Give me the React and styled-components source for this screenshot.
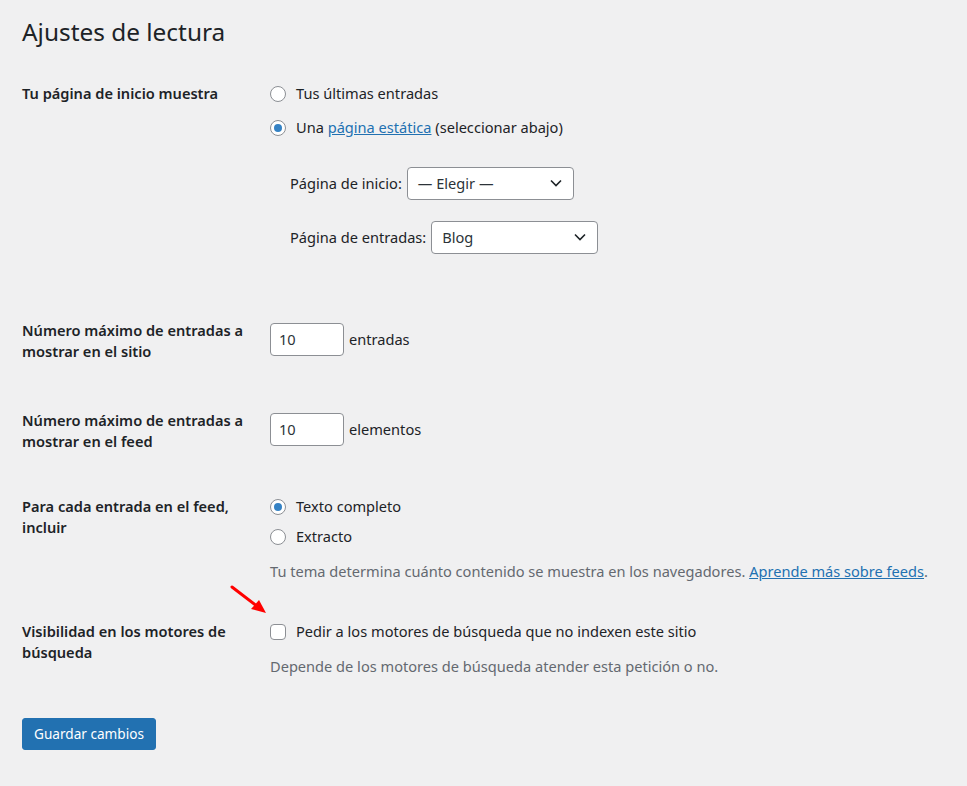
import React from "react";
import styled, { createGlobalStyle } from "styled-components";

const Global = createGlobalStyle`
  html, body { margin: 0; padding: 0; background: #f0f0f1; }
  body { font-family: "Noto Sans", "Open Sans", sans-serif; color: #1d2327; font-size: 14.6px; }
  * { box-sizing: border-box; }
`;

const Page = styled.div`
  position: relative;
  padding: 16px 10px 40px 22px;
  min-height: 786px;
`;

const Title = styled.h1`
  margin: 0;
  font-size: 24.4px;
  font-weight: 400;
  line-height: 31px;
`;

const Row = styled.div`
  display: grid;
  grid-template-columns: 248px 1fr;
  margin-top: ${(p) => p.$mt}px;
  align-items: start;
`;

const Label = styled.div`
  font-weight: 600;
  line-height: 21px;
  padding-right: 10px;
`;

const Field = styled.div`
  display: flex;
  flex-direction: column;
  align-items: flex-start;
`;

const Option = styled.label`
  display: flex;
  align-items: center;
  gap: 10px;
  line-height: 21px;
  margin-top: ${(p) => p.$mt || 0}px;
`;

const Radio = styled.span`
  width: 16px;
  height: 16px;
  border-radius: 50%;
  border: 1px solid #8c8f94;
  background: #fff;
  display: flex;
  align-items: center;
  justify-content: center;
  flex-shrink: 0;
  &::after {
    content: "";
    width: 8px;
    height: 8px;
    border-radius: 50%;
    background: ${(p) => (p.$checked ? "#3582c4" : "transparent")};
  }
`;

const Check = styled.span`
  width: 16px;
  height: 16px;
  border-radius: 4px;
  border: 1px solid #8c8f94;
  background: #fff;
  flex-shrink: 0;
`;

const Link = styled.a`
  color: #2271b1;
  text-decoration: underline;
`;

const SelectRow = styled.div`
  display: flex;
  align-items: center;
  gap: 5px;
  padding-left: 20px;
  margin-top: ${(p) => p.$mt}px;
`;

const Select = styled.div`
  width: 167px;
  height: 33px;
  border: 1px solid #8c8f94;
  border-radius: 4px;
  background: #fff;
  display: flex;
  align-items: center;
  justify-content: space-between;
  padding: 0 10px;
  color: #2c3338;
`;

const InlineRow = styled.div`
  display: flex;
  align-items: center;
  gap: 5px;
  margin-top: 2.5px;
`;

const NumberInput = styled.div`
  width: 74px;
  height: 33px;
  border: 1px solid #8c8f94;
  border-radius: 4px;
  background: #fff;
  display: flex;
  align-items: center;
  padding: 0 8px;
  color: #2c3338;
`;

const Desc = styled.p`
  margin: ${(p) => p.$mt}px 0 0;
  color: #646970;
  line-height: 21px;
  white-space: nowrap;
`;

const Button = styled.button`
  display: block;
  margin-top: ${(p) => p.$mt}px;
  height: 32px;
  width: 134px;
  padding: 0;
  background: #2271b1;
  border: 1px solid #2271b1;
  border-radius: 3px;
  color: #fff;
  font-family: inherit;
  font-size: 13.6px;
  line-height: 30px;
`;

const Arrow = styled.svg`
  position: absolute;
  left: 228px;
  top: 582px;
`;

const Chevron = () => (
  <svg width="14" height="14" viewBox="0 0 14 14">
    <path d="M2 4.5 L7 9.5 L12 4.5" fill="none" stroke="#1d2327" strokeWidth="1.6" />
  </svg>
);

export default function App() {
  return (
    <>
      <Global />
      <Page>
        <Title>Ajustes de lectura</Title>

        <Row $mt={36}>
          <Label>Tu página de inicio muestra</Label>
          <Field>
            <Option>
              <Radio />
              <span>Tus últimas entradas</span>
            </Option>
            <Option $mt={13}>
              <Radio $checked />
              <span>
                Una <Link>página estática</Link> (seleccionar abajo)
              </span>
            </Option>
            <SelectRow $mt={28.5}>
              <span>Página de inicio:</span>
              <Select>
                <span>— Elegir —</span>
                <Chevron />
              </Select>
            </SelectRow>
            <SelectRow $mt={21}>
              <span>Página de entradas:</span>
              <Select>
                <span>Blog</span>
                <Chevron />
              </Select>
            </SelectRow>
          </Field>
        </Row>

        <Row $mt={66.5}>
          <Label>Número máximo de entradas a mostrar en el sitio</Label>
          <InlineRow>
            <NumberInput>10</NumberInput>
            <span>entradas</span>
          </InlineRow>
        </Row>

        <Row $mt={48}>
          <Label>Número máximo de entradas a mostrar en el feed</Label>
          <InlineRow>
            <NumberInput>10</NumberInput>
            <span>elementos</span>
          </InlineRow>
        </Row>

        <Row $mt={44}>
          <Label>Para cada entrada en el feed, incluir</Label>
          <Field>
            <Option>
              <Radio $checked />
              <span>Texto completo</span>
            </Option>
            <Option $mt={9}>
              <Radio />
              <span>Extracto</span>
            </Option>
            <Desc $mt={14}>
              Tu tema determina cuánto contenido se muestra en los navegadores.{" "}
              <Link>Aprende más sobre feeds</Link>.
            </Desc>
          </Field>
        </Row>

        <Row $mt={39}>
          <Label>Visibilidad en los motores de búsqueda</Label>
          <Field>
            <Option>
              <Check />
              <span>Pedir a los motores de búsqueda que no indexen este sitio</span>
            </Option>
            <Desc $mt={13.5}>Depende de los motores de búsqueda atender esta petición o no.</Desc>
          </Field>
        </Row>

        <Button $mt={41.5}>Guardar cambios</Button>

        <Arrow width="42" height="36" viewBox="0 0 42 36">
          <line x1="4" y1="5" x2="30" y2="25" stroke="#f00" strokeWidth="3" strokeLinecap="round" />
          <polygon points="38,31 23,27 31,18" fill="#f00" />
        </Arrow>
      </Page>
    </>
  );
}
